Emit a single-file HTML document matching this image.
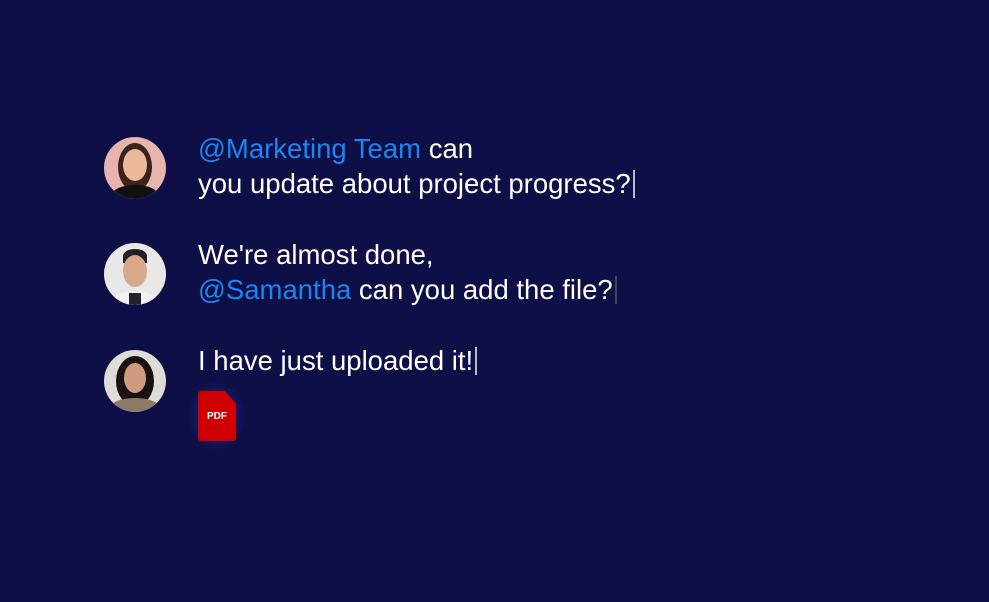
<!DOCTYPE html>
<html><head><style>
body{margin:0;width:989px;height:602px;background:#0f0f48;font-family:"Liberation Sans",sans-serif;overflow:hidden;position:relative}
.av{position:absolute;left:104px;width:62px;height:62px;border-radius:50%;overflow:hidden}
.t{position:absolute;left:198px;color:#fff;font-size:27.5px;line-height:35px;white-space:nowrap}
.m{color:#1a86f0}
.c{display:inline-block;width:2px;height:28px;background:#bbb;vertical-align:-5px;margin-left:2px}
</style></head><body>
<div class="av" style="top:137px;background:#e8b4b0">
<div style="position:absolute;left:14px;top:6px;width:34px;height:48px;border-radius:50%;background:#3a2418"></div>
<div style="position:absolute;left:19px;top:12px;width:24px;height:32px;border-radius:50%;background:#e9b99a"></div>
<div style="position:absolute;left:8px;top:48px;width:46px;height:20px;border-radius:50%;background:#111"></div></div>
<div class="av" style="top:243px;background:#e8e8e6">
<div style="position:absolute;left:19px;top:6px;width:24px;height:14px;border-radius:50% 50% 0 0;background:#222"></div>
<div style="position:absolute;left:19px;top:12px;width:24px;height:32px;border-radius:50%;background:#d8a88a"></div>
<div style="position:absolute;left:8px;top:48px;width:46px;height:20px;border-radius:50%;background:#f2f2f2"></div>
<div style="position:absolute;left:25px;top:50px;width:12px;height:14px;background:#223"></div></div>
<div class="av" style="top:350px;background:#dedcd6">
<div style="position:absolute;left:12px;top:6px;width:38px;height:50px;border-radius:50%;background:#1a1210"></div>
<div style="position:absolute;left:20px;top:13px;width:22px;height:30px;border-radius:50%;background:#d09a80"></div>
<div style="position:absolute;left:6px;top:48px;width:50px;height:20px;border-radius:50%;background:#8a7a66"></div></div>
<div class="t" style="top:131px"><span class="m">@Marketing Team</span> can<br>you update about project progress?<span class="c"></span></div>
<div class="t" style="top:237px">We're almost done,<br><span class="m">@Samantha</span> can you add the file?<span class="c" style="background:#445"></span></div>
<div class="t" style="top:343px">I have just uploaded it!<span class="c"></span></div>
<div style="position:absolute;left:188px;top:381px;width:58px;height:70px;border-radius:50%;background:radial-gradient(closest-side,rgba(40,60,210,.55),rgba(40,60,210,0))"></div>
<div style="position:absolute;left:198px;top:391px;width:38px;height:50px;background:#d10000;border-radius:3px 12px 3px 3px;clip-path:polygon(0 0,70% 0,100% 25%,100% 100%,0 100%);color:#fff;font-size:10px;font-weight:bold;text-align:center;line-height:52px">PDF</div>
</body></html>
